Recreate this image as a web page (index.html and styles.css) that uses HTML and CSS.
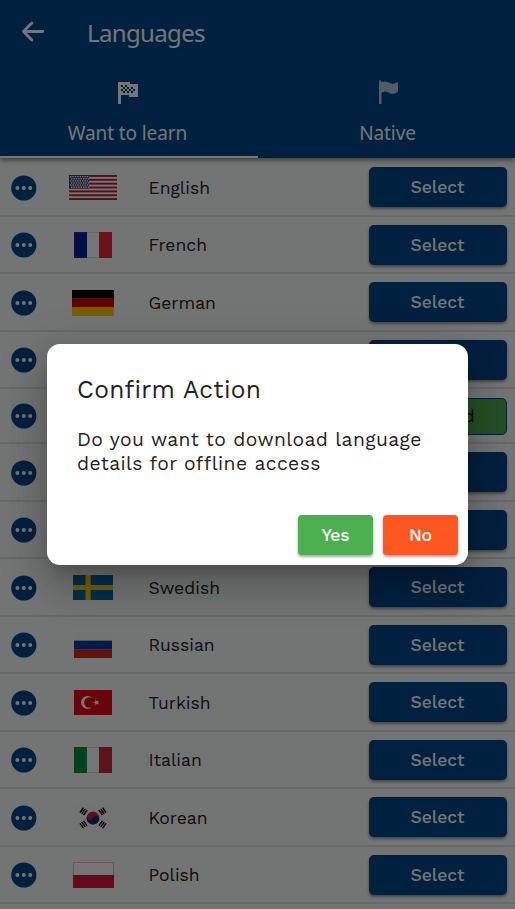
FILE: index.html
```html
<!DOCTYPE html>
<html lang="en">
<head>
<meta charset="utf-8">
<title>Languages</title>
<link rel="stylesheet" href="styles.css">
</head>
<body>
<div class="app">
  <header class="header">
    <div class="bar">
      <svg class="back" viewBox="0 0 24 24"><path d="M20 12H5M11.500 5.500L5 12l6.500 6.500"/></svg>
      <h1 class="title">Languages</h1>
    </div>
    <nav class="tabs">
      <div class="tab active">
        <svg class="tab-icon" viewBox="0 0 28 28"><path fill-rule="evenodd" d="M4 4h12v2h8v13h-9v-2H7v9H4zM7 7h2v2H7zM11 7h2v2h-2zM9 9h2v2H9zM13 9h2v2h-2zM7 11h2v2H7zM11 11h2v2h-2zM15 11h2v2h-2zM9 13h2v2H9zM13 13h2v2h-2zM17 9h2v2h-2zM19 11h2v2h-2zM17 13h2v2h-2z"/></svg>
        <span class="tab-label">Want to learn</span>
      </div>
      <div class="tab second">
        <svg class="tab-icon dim" viewBox="0 0 28 28"><path d="M5 2.500h2v1.500c4-1 6.500-.5 9 1 2.500 1.300 5 .7 8-1v9.500c-3 3-7 3-9.500 1-2.500-1.500-5-1.300-7 .5v11H5z"/></svg>
        <span class="tab-label">Native</span>
      </div>
    </nav>
  </header>
  <main class="list" id="list"></main>
</div>
<div class="scrim">
  <section class="dialog" role="dialog">
    <h2 class="dialog-title">Confirm Action</h2>
    <p class="dialog-text">Do you want to download language<br>details for offline access</p>
    <div class="actions">
      <button class="action yes">Yes</button>
      <button class="action no">No</button>
    </div>
  </section>
</div>
<script src="app.js"></script>
</body>
</html>
```
FILE: styles.css
```css
* { box-sizing: border-box; }
body { margin: 0; width: 515px; height: 909px; overflow: hidden; font-family: "Work Sans", Inter, sans-serif; color: #222; background: #fafcfc; }
.app { width: 515px; height: 909px; overflow: hidden; }
.header { position: relative; height: 158.25px; background: #00478a; color: #fff; font-family: "Segoe UI", "Noto Sans", sans-serif; box-shadow: 0 2px 5px rgba(0,0,0,.5); }
.bar { display: flex; align-items: center; height: 66px; padding-left: 16.5px; }
.back { width: 31px; height: 31px; margin-top: -4px; fill: none; stroke: #fff; stroke-width: 2.2; stroke-linecap: round; stroke-linejoin: round; }
.title { margin: 0 0 0 39.5px; font-size: 24px; font-weight: 400; line-height: 32px; letter-spacing: -.65px; }
.tabs { display: flex; height: 92px; }
.tab { flex: 1; display: flex; flex-direction: column; align-items: center; padding: 12px 3px 0 0; border-bottom: 2.500px solid transparent; }
.second { padding: 12px 0 0 2px; }
.active { border-color: #fff; }
.tab-icon { width: 28px; height: 28px; fill: #fff; }
.dim { opacity: .7; }
.tab-label { margin-top: 13px; font-size: 19px; line-height: 28px; letter-spacing: -.1px; }
.list { padding-top: 1px; }
.row { display: flex; align-items: center; height: 57.5px; padding: 0 8px 0 11px; border-bottom: 2px solid #e1e3e3; }
.row.current { height: 55px; }
.more { width: 26px; height: 26px; flex: none; margin: 1px 0 0 -.5px; }
.flag-box { width: 112px; height: 28px; margin: 1px -.5px 0 .5px; display: flex; align-items: center; justify-content: center; }
.name { flex: 1; margin-top: 1px; font-size: 17.500px; font-weight: 400; line-height: 24px; letter-spacing: .02px; }
.select { width: 138px; height: 40px; padding: 0 1px 0 0; border: 0; border-radius: 5px; background: #00478a; color: #fff; font: 500 17.5px/40px "Work Sans", Inter, sans-serif; letter-spacing: -.05px; text-align: center; box-shadow: 0 2px 3px rgba(0,0,0,.4); }
.current .select { height: 37px; margin-top: 1px; line-height: 35px; background: #4caf50; color: #111; border: 1px solid #00478a; box-shadow: none; font-weight: 400; }
.scrim { position: absolute; inset: 0; width: 515px; height: 909px; background: rgba(0,0,0,.54); }
.dialog { position: absolute; left: 47px; top: 344px; width: 421px; height: 221px; padding: 30px 10px 10px 30px; display: flex; flex-direction: column; border-radius: 13px; background: #fff; box-shadow: 0 11px 15px -7px rgba(0,0,0,.2), 0 24px 38px 3px rgba(0,0,0,.14), 0 9px 46px 8px rgba(0,0,0,.12); }
.dialog-title { margin: 0; font-size: 24.5px; font-weight: 400; line-height: 31px; letter-spacing: .33px; }
.dialog-text { margin: 23px 0 0; font-size: 19.3px; font-weight: 400; line-height: 24px; white-space: nowrap; letter-spacing: .4px; }
.actions { margin-top: auto; display: flex; justify-content: flex-end; gap: 10px; }
.action { width: 75px; height: 40px; padding: 0; border: 0; border-radius: 4px; color: #fff; font: 500 17.5px/40px "Work Sans", Inter, sans-serif; letter-spacing: -.1px; box-shadow: 0 2px 3px rgba(0,0,0,.35); }
.yes { background: #4caf50; }
.no { background: #ff5722; }
```
FILE: app.js
```js
const rect = (x, y, w, h, c) => `<rect x="${x}" y="${y}" width="${w}" height="${h}" fill="${c}"/>`;
const svg = (w, h, body) => `<svg width="${w}" height="${h}" viewBox="0 0 ${w} ${h}">${body}</svg>`;

function usa() {
  let s = rect(0, 0, 48, 25, '#fff');
  for (let i = 0; i < 7; i++) s += rect(0, i * 3.85, 48, 1.92, '#b22234');
  s += rect(0, 0, 20, 13.5, '#3c3b6e');
  for (let r = 0; r < 6; r++)
    for (let c = 0; c < 8; c++) s += rect(1 + c * 2.4 + (r % 2), 1 + r * 2.1, 1.4, 1.4, '#fff');
  return svg(48, 25, s);
}

const tricolor = (a, b) => svg(38, 26, rect(0, 0, 38, 26, '#fff') + rect(0, 0, 13, 26, a) + rect(25, 0, 13, 26, b) +
  `<rect x=".5" y=".5" width="37" height="25" fill="none" stroke="${b}" stroke-opacity=".2"/>`);
const bands = (w, h, colors) => svg(w, h, colors.map((c, i) => rect(0, i * h / colors.length, w, h / colors.length, c)).join(''));

function korea() {
  const trigram = (x, y, a) => `<g transform="translate(${x} ${y}) rotate(${a})">` +
    [-2.2, 0, 2.2].map(d => rect(-3, d - .7, 6, 1.4, '#000')).join('') + rect(-.3, -3, .6, 6, '#777') + '</g>';
  return svg(38, 26, rect(0, 0, 38, 26, '#fafafa') +
    '<g transform="rotate(25 19 13)"><circle cx="19" cy="13" r="6.4" fill="#c9252d"/><path d="M12.600 13a6.400 6.400 0 0 0 12.800 0a3.200 3.200 0 0 0-6.400 0a3.200 3.200 0 0 1-6.400 0" fill="#003478"/></g>' +
    trigram(9.5, 6.3, -55) + trigram(28.5, 6.3, 55) + trigram(9.5, 19.5, 55) + trigram(28.5, 19.5, -55));
}

const languages = [
  ['English', usa()],
  ['French', tricolor('#002395', '#ed2939')],
  ['German', bands(42, 26, ['#000', '#dd0000', '#ffce00'])],
  ['Spanish', bands(38, 26, ['#aa151b', '#f1bf00', '#aa151b'])],
  ['Hindi', bands(38, 26, ['#ff9933', '#fff', '#138808']), 'Selected'],
  ['Japanese', svg(38, 26, rect(0, 0, 38, 26, '#fff') + '<circle cx="19" cy="13" r="7" fill="#bc002d"/>')],
  ['Chinese', svg(38, 26, rect(0, 0, 38, 26, '#de2910'))],
  ['Swedish', svg(40, 25, rect(0, 0, 40, 25, '#006aa7') + rect(12.5, 0, 5.2, 25, '#fecc00') + rect(0, 10, 40, 5, '#fecc00'))],
  ['Russian', bands(38, 26, ['#fafafa', '#0039a6', '#d52b1e'])],
  ['Turkish', svg(38, 25, rect(0, 0, 38, 25, '#e30a17') + '<circle cx="13.500" cy="12.500" r="6.500" fill="#fff"/><circle cx="15.500" cy="12.500" r="5.300" fill="#e30a17"/><path fill="#fff" d="M19 12.500l2.300-.8V9.300l1.500 1.900 2.300-.7-1.300 2 1.300 2-2.300-.7-1.500 1.900v-2.400z"/>')],
  ['Italian', tricolor('#009246', '#ce2b37')],
  ['Korean', korea()],
  ['Polish', svg(41, 26, rect(0, 0, 41, 26, '#fff') + rect(0, 13, 41, 13, '#dc143c') + '<rect x=".5" y=".5" width="40" height="25" fill="none" stroke="#dc143c" stroke-opacity=".35"/>')]
];

const more = '<svg class="more" viewBox="0 0 26 26"><circle cx="12.800" cy="13" r="12.600" fill="#00478a"/><g fill="#fff"><circle cx="6.400" cy="13" r="2"/><circle cx="12.800" cy="13" r="2"/><circle cx="19.200" cy="13" r="2"/></g></svg>';

document.getElementById('list').innerHTML = languages.map(([name, flag, state]) =>
  `<div class="row${state ? ' current' : ''}">${more}<div class="flag-box">${flag}</div><span class="name">${name}</span><button class="select">${state || 'Select'}</button></div>`).join('');
```
